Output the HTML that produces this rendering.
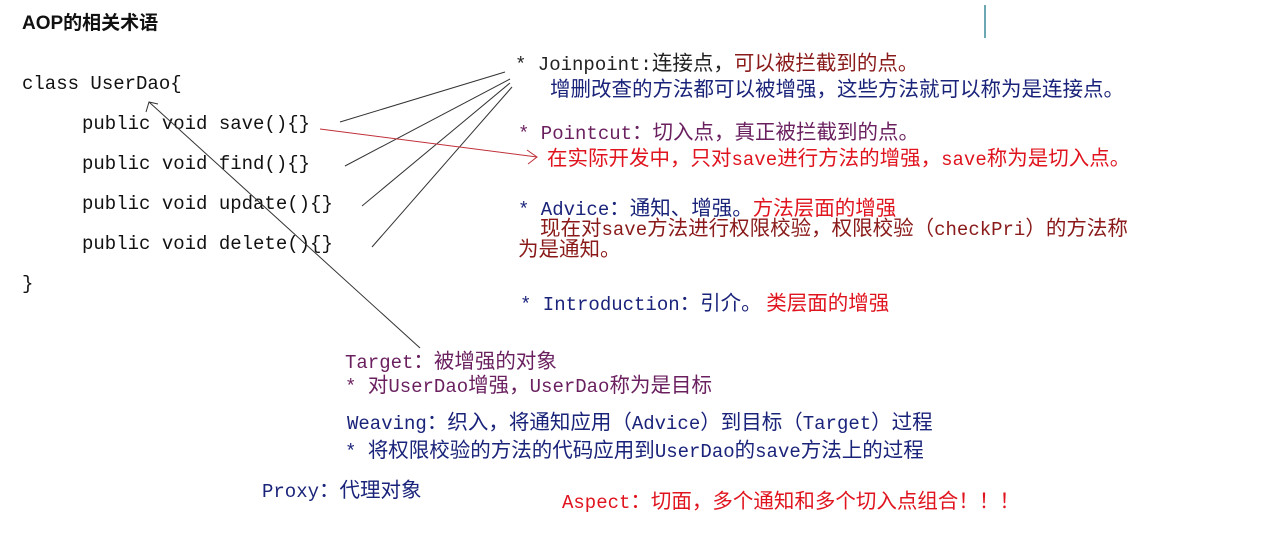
<!DOCTYPE html>
<html><head><meta charset="utf-8"><style>
body{margin:0;width:1266px;height:559px;background:#fff;overflow:hidden;position:relative;font-family:"Liberation Mono","Noto Sans CJK SC",monospace;}
.t{position:absolute;white-space:nowrap;font-size:20.5px;line-height:22px;font-family:"Noto Sans CJK SC","Liberation Mono",sans-serif;margin-top:-3px}
.t i{font-style:normal;font-family:"Liberation Mono",monospace;font-size:19px}
.c{color:#111;font-family:"Liberation Mono",monospace;font-size:19px;margin-top:0}
.nv{color:#1a237a}.rd{color:#e0141e}.pu{color:#6a1f5f}.dk{color:#222}.dr{color:#8a1a1a}
</style></head><body>
<div class="t" style="left:22px;top:16px;font-family:'Liberation Sans','Noto Sans CJK SC',sans-serif;font-weight:bold;font-size:19px;color:#111">AOP的相关术语</div>
<div class="t c" style="left:22px;top:73px">class UserDao{</div>
<div class="t c" style="left:82px;top:113px">public void save(){}</div>
<div class="t c" style="left:82px;top:153px">public void find(){}</div>
<div class="t c" style="left:82px;top:193px">public void update(){}</div>
<div class="t c" style="left:82px;top:233px">public void delete(){}</div>
<div class="t c" style="left:22px;top:273px">}</div>

<div class="t dk" style="left:515px;top:53px"><i>* Joinpoint:</i>连接点，<span class="dr">可以被拦截到的点。</span></div>
<div class="t nv" style="left:550px;top:79px">增删改查的方法都可以被增强，这些方法就可以称为是连接点。</div>
<div class="t pu" style="left:518px;top:122px"><i>* Pointcut</i>：切入点，真正被拦截到的点。</div>
<div class="t rd" style="left:547px;top:148px">在实际开发中，只对<i>save</i>进行方法的增强，<i>save</i>称为是切入点。</div>
<div class="t nv" style="left:518px;top:198px"><i>* Advice</i>：通知、增强。<span class="rd">方法层面的增强</span></div>
<div class="t dr" style="left:540px;top:218px">现在对<i>save</i>方法进行权限校验，权限校验（<i>checkPri</i>）的方法称</div>
<div class="t dr" style="left:518px;top:239px">为是通知。</div>
<div class="t nv" style="left:520px;top:293px"><i>* Introduction</i>：引介。 <span class="rd">类层面的增强</span></div>

<div class="t pu" style="left:345px;top:351px"><i>Target</i>：被增强的对象</div>
<div class="t pu" style="left:345px;top:375px"><i>* </i>对<i>UserDao</i>增强，<i>UserDao</i>称为是目标</div>
<div class="t nv" style="left:347px;top:412px"><i>Weaving</i>：织入，将通知应用（<i>Advice</i>）到目标（<i>Target</i>）过程</div>
<div class="t nv" style="left:345px;top:440px"><i>* </i>将权限校验的方法的代码应用到<i>UserDao</i>的<i>save</i>方法上的过程</div>
<div class="t nv" style="left:262px;top:480px"><i>Proxy</i>：代理对象</div>
<div class="t rd" style="left:562px;top:491px"><i>Aspect</i>：切面，多个通知和多个切入点组合！！！</div>

<svg width="1266" height="559" style="position:absolute;left:0;top:0">
<g stroke="#333" stroke-width="1" fill="none">
<line x1="505" y1="72" x2="340" y2="122"/>
<line x1="510" y1="79" x2="345" y2="166"/>
<line x1="510" y1="83" x2="362" y2="206"/>
<line x1="512" y1="87" x2="372" y2="247"/>
<line x1="149" y1="102" x2="420" y2="348"/>
<polyline points="146,112 149,102 158,104"/>
</g>
<g stroke="#c0303a" stroke-width="1" fill="none">
<line x1="320" y1="129" x2="537" y2="157"/>
<polyline points="527,150 537,157 528,164"/>
</g>
<line x1="985" y1="5" x2="985" y2="38" stroke="#3a8a9a" stroke-width="1.5"/>
</svg>
</body></html>
